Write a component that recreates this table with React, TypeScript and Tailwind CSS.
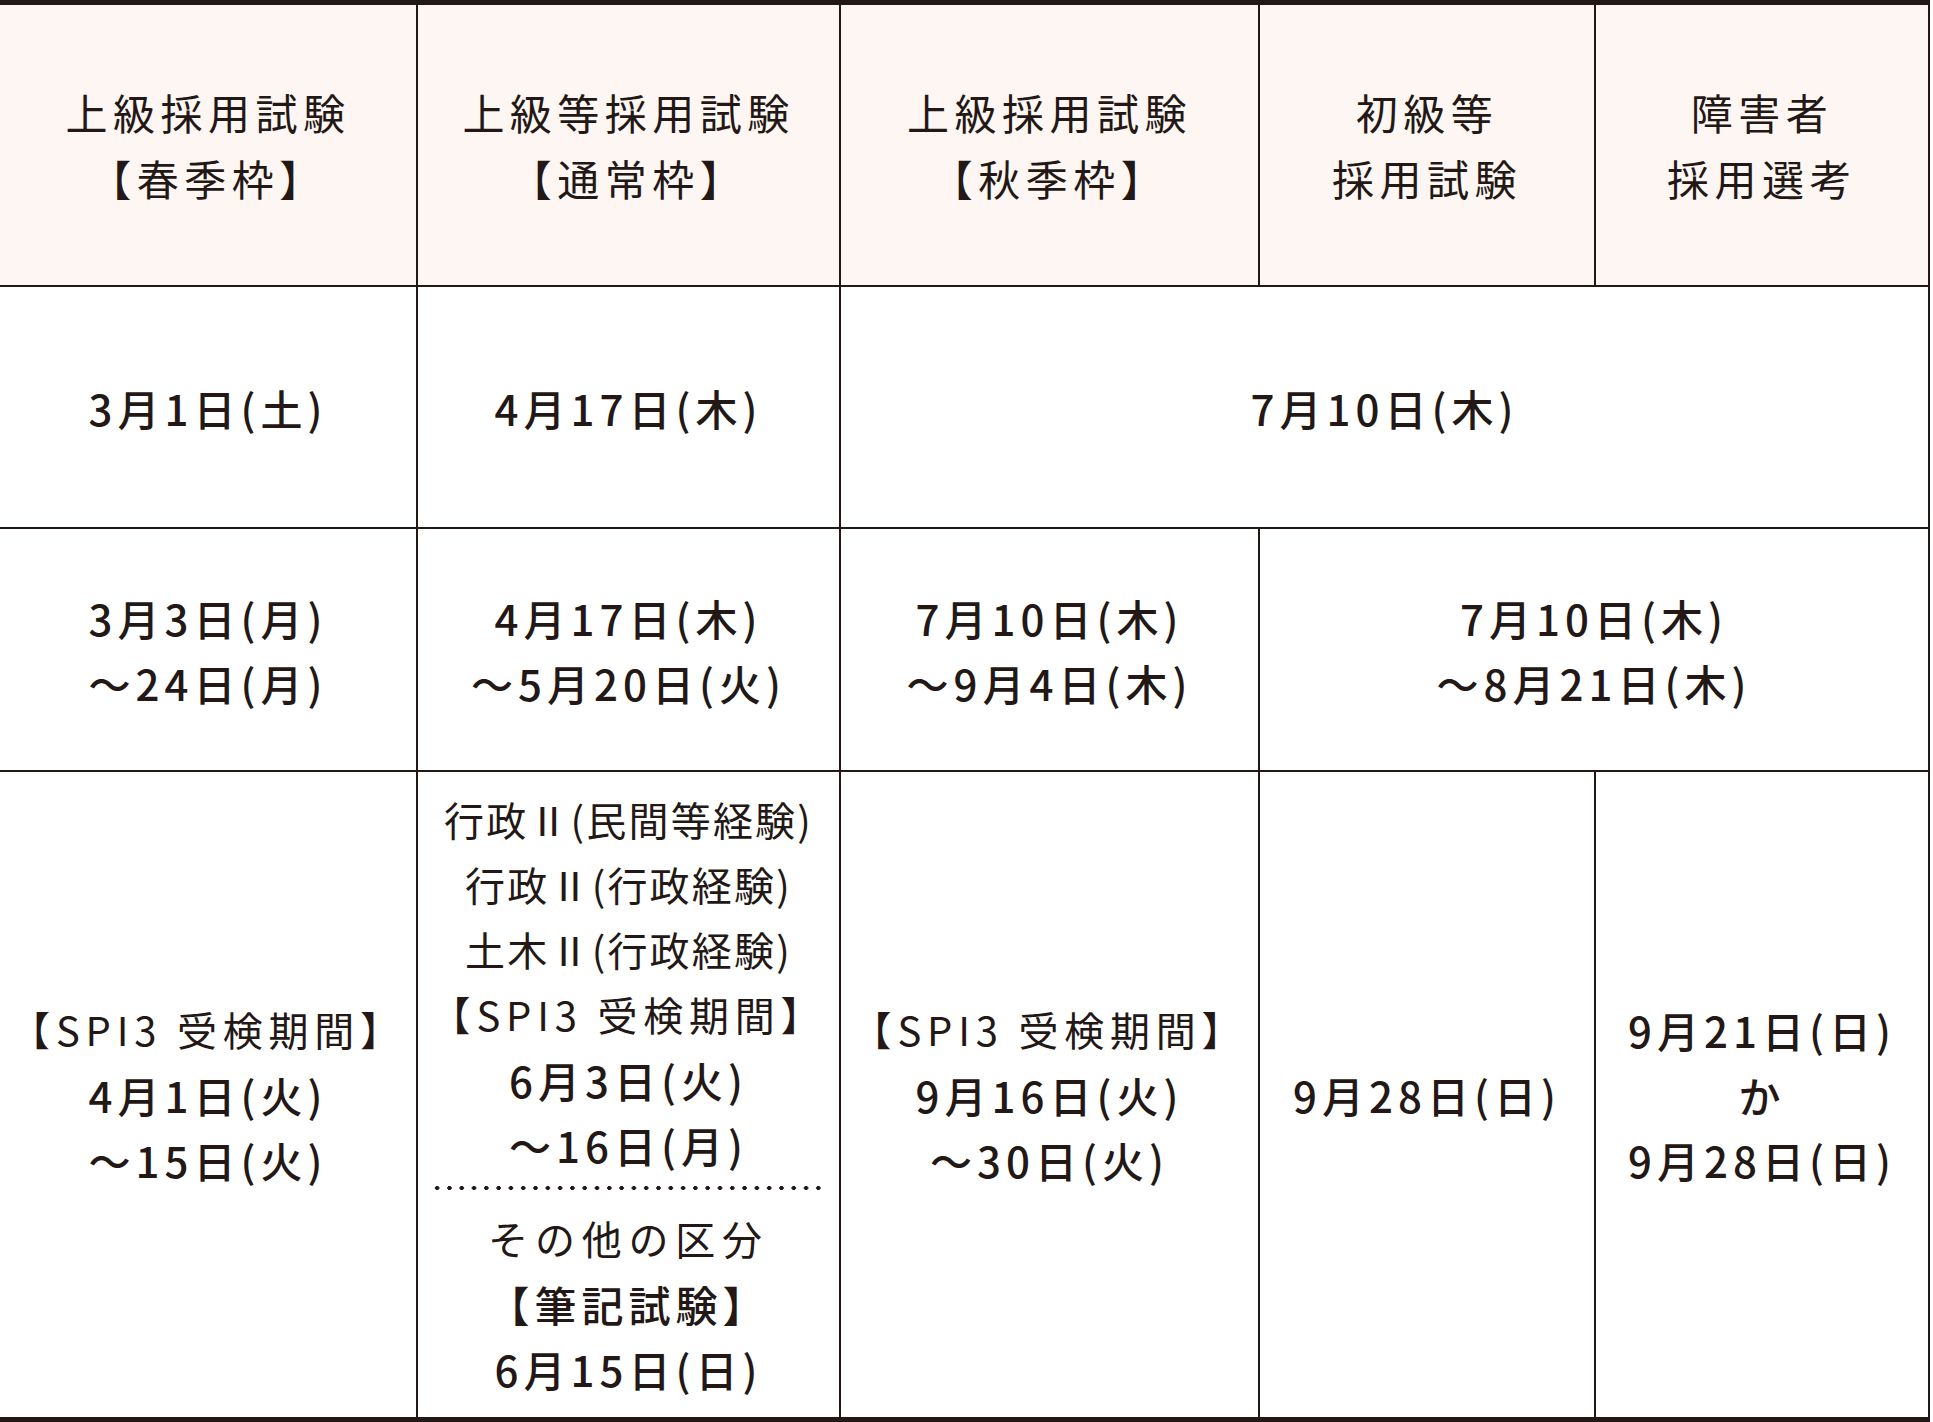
const headers = [
  ['上級採用試験', '【春季枠】'],
  ['上級等採用試験', '【通常枠】'],
  ['上級採用試験', '【秋季枠】'],
  ['初級等', '採用試験'],
  ['障害者', '採用選考'],
];

// border on right + bottom of every cell, first column has no left edge
const cell = 'border-r-2 border-b-2 border-[#231815] text-center align-middle p-0';
const date = 'font-medium text-[42px] tracking-[0.12em] leading-[65px]';
const note = 'font-normal text-[40px] tracking-[0.145em] leading-[65px]';
const noteTight = 'font-normal text-[40px] tracking-[0.055em] leading-[65px]';

const Lines = ({ lines, className }: { lines: string[]; className: string }) => (
  <div className={className}>
    {lines.map((l, i) => (
      <div key={i}>{l}</div>
    ))}
  </div>
);

export default function App() {
  return (
    <div className="min-h-[1422px] bg-white font-['Noto_Sans_CJK_JP',sans-serif] text-[#231815]">
      <table className="w-[1930px] table-fixed border-separate border-spacing-0">
        <colgroup>
          <col className="w-[418px]" />
          <col className="w-[423px]" />
          <col className="w-[419px]" />
          <col className="w-[336px]" />
          <col className="w-[334px]" />
        </colgroup>
        <tbody>
          <tr className="h-[287px]">
            {headers.map((h, i) => (
              <th key={i} className={`${cell} border-t-[5px] bg-[#fdf6f2]`}>
                <Lines lines={h} className="text-[42px] font-normal tracking-[0.13em] leading-[66px]" />
              </th>
            ))}
          </tr>

          <tr className="h-[242px]">
            <td className={cell}>
              <Lines lines={['3月1日(土)']} className={date} />
            </td>
            <td className={cell}>
              <Lines lines={['4月17日(木)']} className={date} />
            </td>
            <td className={cell} colSpan={3}>
              <Lines lines={['7月10日(木)']} className={date} />
            </td>
          </tr>

          <tr className="h-[243px]">
            <td className={cell}>
              <Lines lines={['3月3日(月)', '～24日(月)']} className={date} />
            </td>
            <td className={cell}>
              <Lines lines={['4月17日(木)', '～5月20日(火)']} className={date} />
            </td>
            <td className={cell}>
              <Lines lines={['7月10日(木)', '～9月4日(木)']} className={date} />
            </td>
            <td className={cell} colSpan={2}>
              <Lines lines={['7月10日(木)', '～8月21日(木)']} className={date} />
            </td>
          </tr>

          <tr className="h-[650px]">
            <td className={`${cell} border-b-[5px]`}>
              <Lines lines={['【SPI3 受検期間】']} className={note} />
              <Lines lines={['4月1日(火)', '～15日(火)']} className={date} />
            </td>
            <td className={`${cell} border-b-[5px] !align-top pt-[15px]`}>
              <Lines
                lines={['行政Ⅱ(民間等経験)', '行政Ⅱ(行政経験)', '土木Ⅱ(行政経験)']}
                className={noteTight}
              />
              <Lines lines={['【SPI3 受検期間】']} className={note} />
              <Lines lines={['6月3日(火)', '～16日(月)']} className={date} />
              <div className="mx-[13px] mt-[9px] mb-[16px] h-[4px] bg-[radial-gradient(circle,#231815_1.9px,transparent_2.4px)] bg-[length:12.3px_4px]" />
              <Lines lines={['その他の区分']} className="font-normal text-[40px] tracking-[0.17em] leading-[65px]" />
              <Lines lines={['【筆記試験】', '6月15日(日)']} className={date} />
            </td>
            <td className={`${cell} border-b-[5px]`}>
              <Lines lines={['【SPI3 受検期間】']} className={note} />
              <Lines lines={['9月16日(火)', '～30日(火)']} className={date} />
            </td>
            <td className={`${cell} border-b-[5px]`}>
              <Lines lines={['9月28日(日)']} className={date} />
            </td>
            <td className={`${cell} border-b-[5px]`}>
              <Lines lines={['9月21日(日)', 'か', '9月28日(日)']} className={date} />
            </td>
          </tr>
        </tbody>
      </table>
    </div>
  );
}
